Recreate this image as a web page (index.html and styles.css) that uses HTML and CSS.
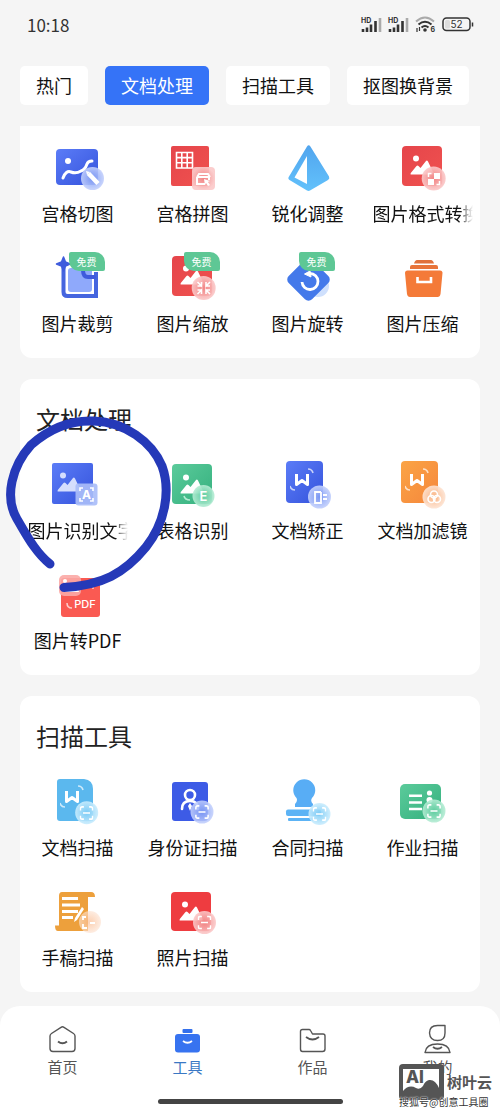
FILE: index.html
```
<!DOCTYPE html>
<html lang="zh-CN">
<head>
    <meta charset="UTF-8">
    <meta name="viewport" content="width=device-width, initial-scale=1.0">
    <title>工具</title>
    <link rel="stylesheet" href="styles.css">
</head>
<body>

    <!-- shared gradients and icon parts -->
    <svg class="sprite" aria-hidden="true">
        <defs>
            <linearGradient id="blue" x1="0" y1="0" x2="1" y2="1"><stop offset="0" stop-color="#5b7cf7"/><stop offset="1" stop-color="#3553dc"/></linearGradient>
            <linearGradient id="red" x1="0" y1="0" x2="1" y2="1"><stop offset="0" stop-color="#e5454b"/><stop offset="1" stop-color="#f0524f"/></linearGradient>
            <linearGradient id="sky" x1="0" y1="0" x2="0" y2="1"><stop offset="0" stop-color="#51a5ee"/><stop offset="1" stop-color="#62c1fb"/></linearGradient>
            <linearGradient id="green" x1="0" y1="0" x2="1" y2="1"><stop offset="0" stop-color="#5bcb9b"/><stop offset="1" stop-color="#35b07e"/></linearGradient>
            <linearGradient id="orange" x1="0" y1="0" x2="1" y2="1"><stop offset="0" stop-color="#fba445"/><stop offset="1" stop-color="#f5873c"/></linearGradient>
            <radialGradient id="lens-blue"><stop offset="0" stop-color="#7f9cf5"/><stop offset="1" stop-color="#c3d0fc"/></radialGradient>
            <radialGradient id="lens-red"><stop offset="0" stop-color="#f28a8a"/><stop offset="1" stop-color="#fbc9c9"/></radialGradient>
            <radialGradient id="lens-sky"><stop offset="0" stop-color="#7fcdf6"/><stop offset="1" stop-color="#c9ecfd"/></radialGradient>
            <radialGradient id="lens-green"><stop offset="0" stop-color="#62cfa2"/><stop offset="1" stop-color="#b5ecd4"/></radialGradient>
            <radialGradient id="lens-orange"><stop offset="0" stop-color="#fbb88a"/><stop offset="1" stop-color="#fde3d2"/></radialGradient>
        </defs>
        <symbol id="hill" viewBox="0 0 24 20">
            <circle cx="6" cy="3.500" r="3"/>
            <path d="M1 19.500Q0 19.500 .8 18L6.500 11Q7.500 10 8.500 11L10.500 13 16 6Q17 5 18 6.500L23.500 18Q24 19.500 23 19.500Z"/>
        </symbol>
        <symbol id="scan" viewBox="0 0 16 16">
            <path d="M1 5V3Q1 1 3 1H5M11 1h2q2 0 2 2V5M15 11v2q0 2-2 2H11M5 15H3Q1 15 1 13V11M4 8H12" fill="none" stroke="#fff" stroke-width="1.800"/>
        </symbol>
        <symbol id="word" viewBox="0 0 24 24">
            <path d="M6.500 6V16.500L12 12.500 17.500 16.500V6" fill="none" stroke="#fff" stroke-width="3" stroke-linejoin="round"/>
            <path d="M18 1Q22 1 23 5M0 18Q1 22 5 22" fill="none" stroke="#fff" stroke-width="1.600" opacity=".7"/>
        </symbol>
        <symbol id="signal" viewBox="0 0 24 18">
            <path d="M3 14v3M7 12.500v4.500M11 9.500v7.500M15.500 6v11" stroke="#333" stroke-width="2.600"/>
            <path d="M20 3V17" stroke="#aaa" stroke-width="2.600"/>
        </symbol>
    </svg>

    <div class="page">
        <header class="status-bar">
            <span class="time">10:18</span>
            <div class="status-icons">
                <svg width="24" height="18" viewBox="0 0 24 18">
                    <use href="#signal"/>
                    <text x="1" y="8" font-size="7" font-weight="700" fill="#333">HD</text>
                </svg>
                <svg width="24" height="18" viewBox="0 0 24 18">
                    <use href="#signal"/>
                    <text x="1" y="8" font-size="7" font-weight="700" fill="#333">HD</text>
                </svg>
                <svg class="wifi" width="24" height="18" viewBox="0 0 24 18" fill="none" stroke-width="2">
                    <path d="M2 6.500Q11-1.500 20 6.500" stroke="#aaa"/>
                    <path d="M4.500 9.500Q11 4 17.500 9.500M7.500 12.500Q11 9.500 14.500 12.500" stroke="#333"/>
                    <circle cx="11" cy="15" r="1.800" fill="#333"/>
                    <path d="M3 13v4M5.500 12v4" stroke="#333" stroke-width="1.200"/>
                    <text x="16.500" y="17" font-size="7" font-weight="700" fill="#333">6</text>
                </svg>
                <svg width="32" height="18" viewBox="0 0 32 18">
                    <rect x="1" y="3" width="27" height="12.500" rx="3.500" fill="none" stroke="#333" stroke-width="1.500"/>
                    <rect x="3" y="5" width="5" height="8.500" rx="1.500" fill="#ddd"/>
                    <path d="M30.500 7.500v4" stroke="#333" stroke-width="1.500"/>
                    <text x="14.500" y="13" font-size="10" text-anchor="middle" fill="#333">52</text>
                </svg>
            </div>
        </header>

        <div class="tabs">
            <button type="button" class="tab">热门</button>
            <button type="button" class="tab active">文档处理</button>
            <button type="button" class="tab">扫描工具</button>
            <button type="button" class="tab">抠图换背景</button>
        </div>

        <main class="content">
            <section class="card card-first">
                <div class="tool-grid">
                    <a href="#" class="tool">
                        <svg class="tool-icon" viewBox="0 0 64 52">
                            <rect x="10" y="7" width="42" height="36" rx="4" fill="url(#blue)"/>
                            <circle cx="22" cy="19" r="3" fill="#fff"/>
                            <path d="M17 36Q20 28 25 30T35 29Q39 28 41 22Q42 19 46 19" fill="none" stroke="#fff" stroke-width="3" stroke-linecap="round"/>
                            <circle cx="46.500" cy="36.500" r="11.500" fill="url(#lens-blue)" opacity=".9"/>
                            <path d="M42.500 31.500 52 41.500" stroke="#fff" stroke-width="4.500"/>
                            <path d="M40 29l4 1-3 3z" fill="#fff"/>
                        </svg>
                        <span class="tool-name">宫格切图</span>
                    </a>
                    <a href="#" class="tool">
                        <svg class="tool-icon" viewBox="0 0 64 52">
                            <rect x="10" y="4" width="38" height="40" rx="2" fill="url(#red)"/>
                            <path d="M15.500 10.500h16v15.500h-16zM15.500 15.600h16M15.500 20.800h16M20.800 10.500V26M26.200 10.500V26" fill="none" stroke="#fff" stroke-width="1.600"/>
                            <rect x="31" y="25" width="23" height="23" rx="4" fill="url(#lens-red)" opacity=".92"/>
                            <path d="M36 35V42H44M36 35H48V38M36 35l2-3h9l2 3" fill="none" stroke="#fff" stroke-width="2"/>
                            <path d="M43 37l6 2-2 1 2 3-2 1-2-3-1 2z" fill="#fff"/>
                        </svg>
                        <span class="tool-name">宫格拼图</span>
                    </a>
                    <a href="#" class="tool">
                        <svg class="tool-icon" viewBox="0 0 64 52">
                            <path d="M31 4.500Q32.700 2 34.400 4.500L53 34.500Q54 36.500 52 38L34 48.500Q32.700 49.300 31 48.500L13.500 38Q11.500 36.500 13 34.500Z" fill="url(#sky)"/>
                            <path d="M31 14V42L18.500 35.500Z" fill="#fff"/>
                        </svg>
                        <span class="tool-name">锐化调整</span>
                    </a>
                    <a href="#" class="tool">
                        <svg class="tool-icon" viewBox="0 0 64 52">
                            <rect x="11" y="4" width="40" height="40" rx="4" fill="url(#red)"/>
                            <use href="#hill" x="19" y="13" width="24" height="20" fill="#fff"/>
                            <circle cx="42.700" cy="36.500" r="12" fill="url(#lens-red)" opacity=".92"/>
                            <path d="M43 31h6v6h-6zM37 37h6v6h-6z" fill="#fff"/>
                            <path d="M37.500 35v-3.500h3M48.500 39v3.500h-3" fill="none" stroke="#fff" stroke-width="1.500"/>
                        </svg>
                        <span class="tool-name fade">图片格式转换</span>
                    </a>
                    <a href="#" class="tool">
                        <svg class="tool-icon" viewBox="0 0 64 52">
                            <path d="M17.500 12V40Q17.500 44 21.500 44H50V20" fill="none" stroke="#4565df" stroke-width="4"/>
                            <path d="M17.500 5 19.500 10 24 12 19.500 14 17.500 19 15.500 14 10.500 12 15.500 10Z" fill="#3f5bdc" stroke="#3f5bdc" stroke-width="1.500" stroke-linejoin="round"/>
                            <rect x="22" y="16" width="24" height="24" rx="3" fill="#8fa9fb"/>
                            <path d="M37 18Q37 25 42 25H48" fill="none" stroke="#3f5bdc" stroke-width="4" stroke-linecap="round"/>
                        </svg>
                        <span class="free">免费</span>
                        <span class="tool-name">图片裁剪</span>
                    </a>
                    <a href="#" class="tool">
                        <svg class="tool-icon" viewBox="0 0 64 52">
                            <rect x="11" y="4" width="40" height="40" rx="4" fill="url(#red)"/>
                            <use href="#hill" x="19" y="13" width="24" height="20" fill="#fff"/>
                            <circle cx="42.700" cy="36" r="12" fill="url(#lens-red)" opacity=".92"/>
                            <path d="M36.500 30l4 4v-4M40.500 34h-4M49 30l-4 4v-4M45 34h4M36.500 42l4-4v4M40.500 38h-4M49 42l-4-4v4M45 38h4" fill="none" stroke="#fff" stroke-width="1.600"/>
                        </svg>
                        <span class="free">免费</span>
                        <span class="tool-name">图片缩放</span>
                    </a>
                    <a href="#" class="tool">
                        <svg class="tool-icon" viewBox="0 0 64 52">
                            <circle cx="42" cy="34" r="11" fill="#cfe0fd"/>
                            <rect x="16" y="11" width="33" height="33" rx="5" transform="rotate(45 32.500 27.500)" fill="#4479ea"/>
                            <path d="M26 30A8 8 0 1 0 34 21.500" fill="none" stroke="#fff" stroke-width="2.800"/>
                            <path d="M28.500 22l5.500-3 1 6z" fill="#fff" stroke="#fff" stroke-linejoin="round"/>
                        </svg>
                        <span class="free">免费</span>
                        <span class="tool-name">图片旋转</span>
                    </a>
                    <a href="#" class="tool">
                        <svg class="tool-icon" viewBox="0 0 64 52">
                            <path d="M23 11.500Q24 8 26 8H40Q42 8 43 11.500Z" fill="#e0713c"/>
                            <path d="M19 17V15Q19 13 21 13H45Q47 13 47 15V17Z" fill="#e8743a"/>
                            <path d="M14 21Q14 18.500 16.500 18.500H49Q51.500 18.500 51.500 21L49.500 42Q49 45 46.500 45H19Q16.500 45 16 42Z" fill="#f47a38"/>
                            <path d="M26.500 25V30H40V25" fill="none" stroke="#fff" stroke-width="2.600"/>
                        </svg>
                        <span class="tool-name">图片压缩</span>
                    </a>
                </div>
            </section>

            <section class="card">
                <h2 class="card-title">文档处理</h2>
                <div class="tool-grid">
                    <a href="#" class="tool">
                        <svg class="tool-icon" viewBox="0 0 64 52">
                            <rect x="6" y="4" width="41" height="41" rx="2" fill="url(#blue)"/>
                            <use href="#hill" x="11" y="13" width="24" height="20" fill="#d5defd"/>
                            <rect x="29.500" y="24.500" width="22" height="22" rx="3" fill="#a9bdf9" opacity=".92"/>
                            <path d="M34 32v-3h3M44 29h3v3M47 39v3h-3M37 42h-3v-3" fill="none" stroke="#fff" stroke-width="1.600"/>
                            <text x="40.500" y="40" font-size="12" font-weight="700" text-anchor="middle" fill="#fff">A</text>
                        </svg>
                        <span class="tool-name fade">图片识别文字</span>
                    </a>
                    <a href="#" class="tool">
                        <svg class="tool-icon" viewBox="0 0 64 52">
                            <rect x="11" y="5" width="40" height="40" rx="4" fill="url(#green)"/>
                            <use href="#hill" x="19" y="15" width="24" height="20" fill="#fff"/>
                            <path d="M23 37Q24 41 29 41" fill="none" stroke="#b5ecd4" stroke-width="1.600"/>
                            <circle cx="42.500" cy="37" r="11" fill="url(#lens-green)" opacity=".92"/>
                            <text x="42.500" y="41.500" font-size="13" font-weight="600" text-anchor="middle" fill="#fff">E</text>
                        </svg>
                        <span class="tool-name">表格识别</span>
                    </a>
                    <a href="#" class="tool">
                        <svg class="tool-icon" viewBox="0 0 64 52">
                            <rect x="10" y="2" width="37" height="42" rx="4" fill="url(#blue)"/>
                            <use href="#word" x="14" y="9" width="24" height="24"/>
                            <circle cx="43.500" cy="38" r="11.500" fill="url(#lens-blue)" opacity=".92"/>
                            <path d="M45 33H39V44H45V33M47 36h4M47 40h4" fill="none" stroke="#fff" stroke-width="1.800"/>
                        </svg>
                        <span class="tool-name">文档矫正</span>
                    </a>
                    <a href="#" class="tool">
                        <svg class="tool-icon" viewBox="0 0 64 52">
                            <rect x="10" y="2" width="37" height="42" rx="4" fill="url(#orange)"/>
                            <use href="#word" x="14" y="9" width="24" height="24"/>
                            <circle cx="43" cy="38" r="11.500" fill="url(#lens-orange)" opacity=".92"/>
                            <g fill="none" stroke="#fff" stroke-width="1.600">
                                <circle cx="43" cy="35.500" r="3.500"/>
                                <circle cx="40.500" cy="40" r="3.500"/>
                                <circle cx="46" cy="40" r="3.500"/>
                            </g>
                        </svg>
                        <span class="tool-name">文档加滤镜</span>
                    </a>
                    <a href="#" class="tool">
                        <svg class="tool-icon" viewBox="0 0 64 52">
                            <rect x="15" y="9" width="39" height="39" rx="3" fill="#fa5a52"/>
                            <rect x="13" y="6" width="22" height="21" rx="5" fill="#fba9a5" opacity=".9"/>
                            <path d="M17 23l5-6 4 3 4-5 3 8z" fill="#fff"/>
                            <circle cx="19" cy="12" r="2" fill="#fff"/>
                            <path d="M42 15h5v5M21 34Q21 39 26 39" fill="none" stroke="#fff" stroke-width="1.500" opacity=".7"/>
                            <text x="39" y="38.500" font-size="11" font-weight="500" text-anchor="middle" fill="#fff">PDF</text>
                        </svg>
                        <span class="tool-name">图片转PDF</span>
                    </a>
                </div>
            </section>

            <section class="card">
                <h2 class="card-title">扫描工具</h2>
                <div class="tool-grid">
                    <a href="#" class="tool">
                        <svg class="tool-icon" viewBox="0 0 64 52">
                            <path d="M14 3H38Q47 4 47 13V45H14Q11 45 11 42V6Q11 3 14 3Z" fill="#5bb8ee"/>
                            <use href="#word" x="14" y="9" width="24" height="24"/>
                            <circle cx="40.700" cy="36.700" r="11.500" fill="url(#lens-sky)" opacity=".92"/>
                            <use href="#scan" x="33.500" y="30" width="14" height="14"/>
                        </svg>
                        <span class="tool-name">文档扫描</span>
                    </a>
                    <a href="#" class="tool">
                        <svg class="tool-icon" viewBox="0 0 64 52">
                            <rect x="11" y="6" width="36" height="39" rx="3" fill="#3d5be6"/>
                            <circle cx="29" cy="19" r="5" fill="none" stroke="#fff" stroke-width="2.600"/>
                            <path d="M21 33Q21 25 29 25T37 33" fill="none" stroke="#fff" stroke-width="2.600" stroke-linecap="round"/>
                            <path d="M29 27l2 3-2 5-2-5z" fill="#fff"/>
                            <circle cx="41" cy="36" r="11.500" fill="url(#lens-blue)" opacity=".88"/>
                            <use href="#scan" x="34" y="29" width="14" height="14"/>
                        </svg>
                        <span class="tool-name">身份证扫描</span>
                    </a>
                    <a href="#" class="tool">
                        <svg class="tool-icon" viewBox="0 0 64 52">
                            <path d="M20.500 22A11 11 0 1 1 36 22Q34 25 37 28V31H19V28Q22 25 20.500 22Z" fill="#58adf5"/>
                            <rect x="10" y="33.500" width="35" height="6.500" rx="2" fill="#5cb3f5"/>
                            <rect x="12" y="42" width="27" height="3" rx="1" fill="#5cb3f5"/>
                            <circle cx="43.500" cy="38" r="11" fill="url(#lens-sky)" opacity=".9"/>
                            <use href="#scan" x="36.500" y="31" width="14" height="14"/>
                        </svg>
                        <span class="tool-name">合同扫描</span>
                    </a>
                    <a href="#" class="tool">
                        <svg class="tool-icon" viewBox="0 0 64 52">
                            <rect x="9" y="8" width="41" height="35" rx="5" fill="url(#green)"/>
                            <path d="M18 19.700H31M18 26.500H31M18 33H31" stroke="#fff" stroke-width="2.400"/>
                            <circle cx="38.500" cy="17" r="2.600" fill="#fff"/>
                            <circle cx="38.500" cy="24" r="3" fill="#fff"/>
                            <circle cx="43" cy="35" r="11.500" fill="url(#lens-green)" opacity=".9"/>
                            <use href="#scan" x="36" y="28" width="14" height="14"/>
                        </svg>
                        <span class="tool-name">作业扫描</span>
                    </a>
                    <a href="#" class="tool">
                        <svg class="tool-icon" viewBox="0 0 64 52">
                            <path d="M16 6H45Q49 6 49 11H42V45H12Q9 45 9 39.500H13V10Q13 6 16 6Z" fill="#eda03c"/>
                            <path d="M16 12.500H32M16 19H34M16 25.500H32M16 31.500H27" stroke="#fff" stroke-width="3"/>
                            <circle cx="44" cy="36" r="11" fill="url(#lens-orange)" opacity=".65"/>
                            <path d="M36 21l-7 11-1 4 3-2 7-11z" fill="#fff"/>
                            <path d="M40 31h-3v3M37 38v4h4M44 37h5" fill="none" stroke="#fff" stroke-width="1.800"/>
                        </svg>
                        <span class="tool-name">手稿扫描</span>
                    </a>
                    <a href="#" class="tool">
                        <svg class="tool-icon" viewBox="0 0 64 52">
                            <rect x="10" y="6" width="40" height="39" rx="4" fill="#ee3c40"/>
                            <use href="#hill" x="18" y="15" width="24" height="20" fill="#fff"/>
                            <circle cx="43.500" cy="36.500" r="11.500" fill="url(#lens-red)" opacity=".9"/>
                            <use href="#scan" x="36.500" y="29.500" width="14" height="14"/>
                        </svg>
                        <span class="tool-name">照片扫描</span>
                    </a>
                </div>
            </section>
        </main>

        <footer class="bottom">
            <nav class="nav">
                <a href="#" class="nav-item">
                    <svg width="32" height="30" viewBox="0 0 32 30" fill="none" stroke="#555" stroke-width="1.400" stroke-linejoin="round">
                        <path d="M14 3.300Q15.500 2.300 17 3.300L26.500 9.500Q28 10.500 28 12V24.500Q28 27.500 25 27.500H6Q3 27.500 3 24.500V12Q3 10.500 4.500 9.500Z"/>
                        <path d="M11 17.500Q15.500 21 20 17.500" stroke-width="2"/>
                    </svg>
                    <span>首页</span>
                </a>
                <a href="#" class="nav-item current">
                    <svg width="32" height="30" viewBox="0 0 32 30">
                        <rect x="10.500" y="5" width="10" height="4" rx="1" fill="#3470ec"/>
                        <path d="M6 10H25Q28 10 28 13V25.500Q28 28.500 25 28.500H6Q3 28.500 3 25.500V13Q3 10 6 10Z" fill="#3773f0"/>
                        <path d="M11 17Q15.500 20.500 20 17" fill="none" stroke="#fff" stroke-width="1.800"/>
                    </svg>
                    <span>工具</span>
                </a>
                <a href="#" class="nav-item">
                    <svg width="32" height="30" viewBox="0 0 32 30" fill="none" stroke="#555" stroke-width="1.400" stroke-linejoin="round">
                        <path d="M5.500 5.500H12Q13 5.500 13.500 6.500L15.500 10H26Q28 10 28 12V25Q28 27.500 25.500 27.500H5.500Q3.500 27.500 3.500 25V7.500Q3.500 5.500 5.500 5.500Z"/>
                        <path d="M9 13Q15.500 18 22 13" stroke-width="1.800"/>
                    </svg>
                    <span>作品</span>
                </a>
                <a href="#" class="nav-item">
                    <svg width="32" height="30" viewBox="0 0 32 30" fill="none" stroke="#555" stroke-width="1.400" stroke-linejoin="round">
                        <path d="M23 1.500V9Q23 16.500 15.500 16.500T7.500 9Q7.500 1.500 15.500 1.500Z"/>
                        <path d="M3 28.500Q4 20 15.500 20T28 28.500Z"/>
                        <path d="M11 23Q15.500 26.500 20 23" stroke-width="1.800"/>
                    </svg>
                    <span>我的</span>
                </a>
            </nav>
            <div class="home-bar"></div>

            <div class="watermark">
                <div class="brand">
                    <svg width="45" height="36" viewBox="0 0 45 36">
                        <rect width="45" height="36" rx="4" fill="#555"/>
                        <path d="M4 5H40V24Q36 15 30 16Q26 17 24 22Q21 26 17 24Q10 20 4 27Z" fill="#fff"/>
                        <text x="7" y="19" font-size="17" font-weight="800" fill="#555">AI</text>
                    </svg>
                    <span>树叶云</span>
                </div>
                <div class="source">搜狐号@创意工具圈</div>
            </div>
        </footer>

        <!-- hand-drawn marker ring -->
        <svg class="marker" width="170" height="180" viewBox="0 0 170 180" aria-hidden="true">
            <path d="M47 149C32 137 23 119 14 104C1 82 9 51 28 30C48 12 68 5 91 6C122 7 149 27 159 51C168 76 162 108 143 132C121 159 99 170 61 172.500"/>
        </svg>
    </div>

</body>
</html>
```
FILE: styles.css
```
* {
    box-sizing: border-box;
}

body {
    margin: 0;
    background-color: #f5f5f5;
    font-family: "Noto Sans CJK SC", "Noto Sans", sans-serif;
    color: #111;
}

a {
    color: inherit;
    text-decoration: none;
}

svg {
    display: block;
    flex-shrink: 0;
}

svg text {
    font-family: Inter, "Liberation Sans", sans-serif;
    stroke: none;
}

.sprite {
    position: absolute;
    width: 0;
    height: 0;
}

.page {
    position: relative;
    display: flex;
    flex-direction: column;
    min-height: 100vh;
    overflow: hidden;
}

/* Status bar */
.status-bar {
    display: flex;
    justify-content: space-between;
    align-items: center;
    height: 48px;
    padding: 0 26px 0 27px;
}

.time {
    font-size: 17px;
    color: #333;
}

.status-icons {
    display: flex;
    gap: 3px;
}

.wifi {
    margin-right: 1px;
}

/* Category tabs */
.tabs {
    display: flex;
    gap: 17px;
    padding: 18px 20px 21px;
}

.tab {
    flex-shrink: 0;
    padding: 6px 16px;
    border: none;
    border-radius: 5px;
    background-color: #fff;
    font-family: inherit;
    font-size: 18px;
    line-height: 27px;
    color: #111;
    cursor: pointer;
}

.tab.active {
    background-color: #3573f7;
    color: #fff;
}

/* Cards */
.content {
    display: flex;
    flex-direction: column;
    flex: 1;
    gap: 21px;
    padding: 0 20px 14px;
}

.card {
    padding: 24px 0 23px;
    border-radius: 12px;
    background-color: #fff;
}

.card-first {
    padding-top: 16px;
    border-radius: 0 0 12px 12px;
}

.card-title {
    margin: 0 0 24px;
    padding-left: 16px;
    font-size: 24px;
    font-weight: 400;
    line-height: 32px;
    color: #222;
}

.tool-grid {
    display: grid;
    grid-template-columns: repeat(4, 1fr);
    row-gap: 27px;
}

.tool {
    position: relative;
    display: flex;
    flex-direction: column;
    align-items: center;
    gap: 7px;
    min-width: 0;
}

.tool-icon {
    width: 64px;
    height: 52px;
}

.tool-name {
    max-width: 100px;
    overflow: hidden;
    font-size: 18px;
    line-height: 24px;
    white-space: nowrap;
}

.tool-name.fade {
    -webkit-mask-image: linear-gradient(to right, #000 88%, rgba(0, 0, 0, 0.5) 92%, transparent);
    mask-image: linear-gradient(to right, #000 88%, rgba(0, 0, 0, 0.5) 92%, transparent);
}

.free {
    position: absolute;
    top: 0;
    left: calc(50% - 9px);
    width: 36px;
    border-radius: 2px 10px 2px 10px;
    background-color: #5ec795;
    font-size: 10px;
    line-height: 19px;
    text-align: center;
    color: #fff;
}

/* Bottom navigation */
.bottom {
    position: relative;
    padding: 18px 0 7px;
    border-radius: 20px 20px 0 0;
    background-color: #fff;
}

.nav {
    display: grid;
    grid-template-columns: repeat(4, 1fr);
}

.nav-item {
    display: flex;
    flex-direction: column;
    align-items: center;
    gap: 3px;
    font-size: 15px;
    line-height: 20px;
    color: #555;
}

.nav-item.current {
    color: #3a78c4;
}

.home-bar {
    width: 37%;
    height: 5px;
    margin: 22px auto 0;
    border-radius: 3px;
    background-color: #444;
}

/* Overlays */
.watermark {
    position: absolute;
    right: 8px;
    bottom: 2px;
    color: #555;
}

.brand {
    display: flex;
    align-items: center;
    gap: 3px;
    font-size: 15px;
    font-weight: 700;
    line-height: 20px;
}

.source {
    margin-top: -5px;
    font-size: 10px;
    line-height: 14px;
    color: #333;
    text-shadow: 0 0 1px #fff, 0 0 2px #fff;
}

.marker {
    position: absolute;
    top: 415px;
    left: 3px;
    fill: none;
    stroke: #2539b8;
    stroke-width: 9;
    stroke-linecap: round;
    pointer-events: none;
}
```
